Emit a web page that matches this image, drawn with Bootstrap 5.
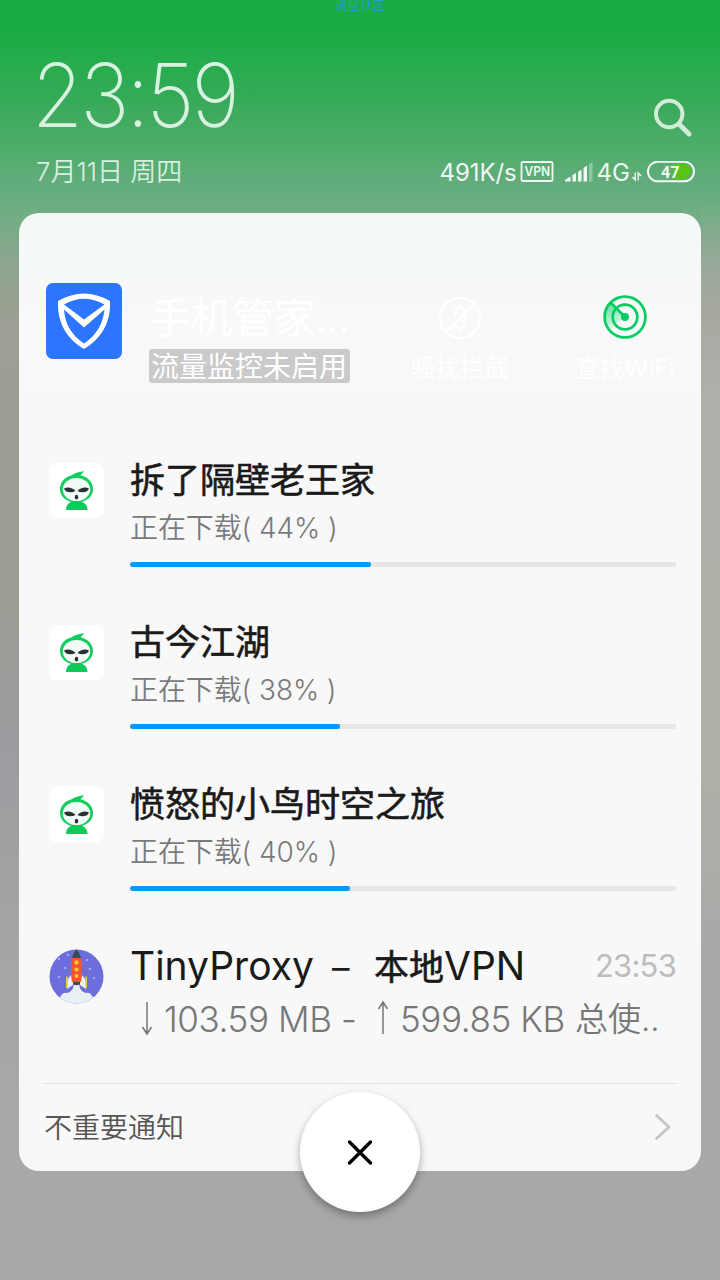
<!DOCTYPE html>
<html lang="zh-CN">
<head>
<meta charset="utf-8">
<meta name="viewport" content="width=device-width, initial-scale=1">
<title>通知</title>
<link href="https://cdn.jsdelivr.net/npm/bootstrap@5.3.0/dist/css/bootstrap.min.css" rel="stylesheet">
<style>
body{width:720px;height:1280px;overflow:hidden;font-family:Inter,"Noto Sans CJK SC",sans-serif;
 background:
 linear-gradient(#b0b0ab00 200px,#b0b0ab 400px,#b0b0a8 760px,#a8a8a8 960px) right top/20px 100% no-repeat,
 linear-gradient(#17ad42 0,#19ab43 30px,#27ac4e 65px,#36aa58 100px,#4fad6b 150px,#60ac7a 180px,#6eae83 210px,#8ba58f 260px,#9c9f93 320px,#9c9d94 600px,#9b9c9f 740px,#a5a5a6 950px,#a8a8a8 1100px)}
.shade{height:213px}
.toplabel{font-size:12.5px;line-height:12px;height:12px;color:#2a9ad0}
.shade-main{height:140px;padding:0 28px 0 32px}
.clock{font:200 88px/91px Inter,sans-serif;letter-spacing:-3px;color:#d9f1e0;margin-top:38px;transform:scaleX(.94);transform-origin:0 50%}
.find-ico{margin-bottom:1px}
.shade-info{height:40px;padding:0 25px 0 36px;color:#f0f8f2}
.date-txt{font-size:26px;line-height:40px;color:#d9efe0;font-weight:350}
.net{font-size:24px;line-height:40px}
.speed{letter-spacing:-.1px;padding-top:1px}
.vpn-box{margin-left:3px}
.bars{margin:0 3px 0 10px}
.gen{margin-right:1px;padding-top:1px}
.panel-sheet{width:682px;height:958px;margin:0 auto;border-radius:20px;background:linear-gradient(#f3f9f6,#f8f9f8 110px,#f8f8f8 180px)}
.mgr{height:231px;padding:70px 0 0 27px}
.mgr-text{margin-left:27px;width:202px}
.mgr-title{font-size:42px;line-height:66px;color:#fff;letter-spacing:-.5px;white-space:nowrap;padding-top:2px;margin-bottom:-2px}
.mgr-sub{font-size:28px;line-height:37px;height:34px;background:#cacaca;color:#fff;border-radius:3px;padding:0 2px;white-space:nowrap;width:201px}
.mgr-act{width:120px;font-size:24.500px;line-height:30px;color:#fff;margin:12px 0 0 49px;white-space:nowrap}
.mgr-act + .mgr-act{margin-left:45px}
.mgr-act svg{margin-bottom:12px}
.notice{height:162px;padding:16px 25px 0 30px}
.notice-icon{width:55px;height:55px;margin:3px 26px 0 0}
.n-title{font-size:35px;line-height:40px;color:#1a1a1a;-webkit-text-stroke:.6px #1a1a1a;white-space:nowrap}
.n-sub{font-size:28px;line-height:36px;margin-top:10px;color:#7a7a7a;font-weight:350;letter-spacing:-.1px;white-space:pre}
.n-bar{height:5px;margin-top:16px;background:#e7e7e7;border-radius:2px}
.n-bar .progress-bar{background:#0399ff;border-radius:2px}
.last-one{height:153px}
.latin{font-size:39px;-webkit-text-stroke:0}
.t-name{width:202px}
.t-dash{width:42px;font-size:35px}
.stamp{font-size:31px;letter-spacing:-.8px;color:#bdbdbd;line-height:40px}
.last-one .n-sub{font-size:35px;line-height:44px;margin-top:10px;color:#777;letter-spacing:-.4px}
.s-down{width:178px}
.s-up{width:175px}
.s-cjk{font-size:33px;letter-spacing:0}
.foot{height:88px;margin:0 25px;border-top:1px solid #e2e2e2;font-size:28px;color:#555;font-weight:350;padding:1px 4px 0 0}
.dismiss{width:120px;height:120px;left:300px;top:1092px;box-shadow:0 4px 9px rgba(0,0,0,.32)}
</style>
<script src="https://cdn.jsdelivr.net/npm/bootstrap@5.3.0/dist/js/bootstrap.bundle.min.js"></script>
</head>
<body class="m-0 position-relative">
<svg width="0" height="0" class="position-absolute">
 <symbol id="imp" viewBox="0 0 55 55">
  <rect width="55" height="55" rx="8" fill="#fff"/>
  <path d="M22 12.500C26 9.500 31 9 35 8Q34 10 31.500 12.300C39 14 44 19.500 44 26C44 34 37 39.500 27.500 39.500S11 34 11 26C11 19 16 14 22 12.500Z" fill="#12cd5e"/>
  <ellipse cx="27.500" cy="26.500" rx="13.700" ry="11.500" fill="#f3fbf6"/>
  <path d="M17 47C17 41 21 38 27.500 38S38.500 41 38.500 47Z" fill="#10c95a"/>
  <path d="M15 25.500C19 23.500 24 25 26.500 28C22 30.500 16.500 29.500 15 25.500ZM40 25.500C36 23.500 31 25 28.500 28C33 30.500 38.500 29.500 40 25.500Z" fill="#2b3030"/>
  <ellipse cx="27.500" cy="34.200" rx="1.700" ry="2.400" fill="#2b3030"/>
 </symbol>
</svg>

<header class="shade">
 <div class="toplabel text-center">流星社区</div>
 <div class="shade-main d-flex justify-content-between align-items-start">
  <div class="clock">23:59</div>
  <svg class="find-ico align-self-end" width="40" height="56" viewBox="0 0 40 56"><g fill="none" stroke="#d2ecd9"><circle cx="17.200" cy="19" r="13.200" stroke-width="4"/><path d="M27.500 29.500L37 39" stroke-width="4.800" stroke-linecap="round"/></g></svg>
 </div>
 <div class="shade-info d-flex justify-content-between align-items-center">
  <span class="date-txt">7月11日 周四</span>
  <div class="d-flex align-items-center net">
   <span class="speed">491K/s</span>
   <svg class="vpn-box" width="34" height="22" viewBox="0 0 34 22"><rect x="1.500" y="1" width="31" height="19" rx="1.500" fill="none" stroke="#f0f8f2" stroke-width="1.800"/><text x="4.500" y="15.200" font-family="Inter" font-size="12.500" font-weight="600" fill="#f0f8f2" textLength="25.500" lengthAdjust="spacingAndGlyphs">VPN</text></svg>
   <svg class="bars" width="30" height="22" viewBox="0 0 30 22" fill="#f0f8f2"><path d="M1 20.500V19L5.500 16H6.500V20.500ZM8.500 14L12 12V20.500H8.500ZM14 11L17.500 8.500V20.500H14ZM19.500 7L23 4.500V20.500H19.500Z"/><path d="M25 3L28.500 1V20.500H25Z" opacity=".35"/></svg>
   <span class="gen">4G</span>
   <svg width="12" height="22" viewBox="0 0 12 22" fill="none" stroke="#f0f8f2" stroke-width="1.400"><path d="M4.200 11.500V19L1.500 16M7.200 19.500V12L10 15"/></svg>
   <svg class="ms-1" width="48" height="22" viewBox="0 0 48 22"><rect x="1" y=".8" width="46" height="19.500" rx="9.700" fill="none" stroke="#f2faf3" stroke-width="2"/><path d="M27 2.800H37A7.800 7.800 0 0 1 37 18.300H25Z" fill="#57c417"/><text x="14" y="16.800" font-family="Roboto" font-size="17" font-weight="700" fill="#f4fbf4" textLength="18.500" lengthAdjust="spacingAndGlyphs">47</text></svg>
  </div>
 </div>
</header>

<main class="panel-sheet">
 <section class="mgr d-flex align-items-start">
  <svg class="flex-shrink-0" width="76" height="76" viewBox="0 0 76 76"><rect width="76" height="76" rx="7" fill="#2c75fe"/><path fill="#fff" fill-rule="evenodd" d="M12 18Q38 3 64 18C65 40 55 56 38 66C21 56 11 40 12 18ZM18 21.500Q38 10 58.500 21.500L38 36.500ZM18 26.500L38 44.500L58.500 26.500C57 41 50.500 52 38 60.500C25.500 52 19 41 18 26.500Z"/></svg>
  <div class="mgr-text flex-shrink-0">
   <div class="mgr-title">手机管家...</div>
   <div class="mgr-sub d-inline-block">流量监控未启用</div>
  </div>
  <div class="mgr-act flex-shrink-0 text-center">
   <svg class="d-block mx-auto" width="46" height="46" viewBox="0 0 46 46" fill="none" stroke="#fff" stroke-width="2.200"><circle cx="23" cy="23" r="20"/><path d="M9 37L37 9M18.500 21V15L23 11L27.500 15V31L23 35L18.500 31V27"/></svg>
   <div>骚扰拦截</div>
  </div>
  <div class="mgr-act flex-shrink-0 text-center">
   <svg class="d-block mx-auto" width="46" height="46" viewBox="0 0 46 46" fill="none" stroke="#07cc64" stroke-width="2.700"><defs><linearGradient id="sweep" x1=".4" y1="0" x2=".7" y2="1"><stop stop-color="#07cc64" stop-opacity=".6"/><stop offset="1" stop-color="#07cc64" stop-opacity="0"/></linearGradient></defs><path d="M23 22L9 8A20 20 0 0 0 8 35Z" fill="url(#sweep)" stroke="none"/><circle cx="23" cy="22" r="20.400"/><circle cx="23" cy="22" r="12.300"/><path d="M9 8L23 22"/><circle cx="23" cy="22" r="4" fill="#07cc64" stroke="none"/></svg>
   <div>查找WiFi</div>
  </div>
 </section>

 <article class="notice d-flex">
  <svg class="notice-icon flex-shrink-0"><use href="#imp"/></svg>
  <div class="flex-grow-1"><div class="n-title">拆了隔壁老王家</div><div class="n-sub">正在下载( 44% )</div><div class="progress n-bar"><div class="progress-bar" style="width:44.1%"></div></div></div>
 </article>
 <article class="notice d-flex">
  <svg class="notice-icon flex-shrink-0"><use href="#imp"/></svg>
  <div class="flex-grow-1"><div class="n-title">古今江湖</div><div class="n-sub">正在下载( 38% )</div><div class="progress n-bar"><div class="progress-bar" style="width:38.4%"></div></div></div>
 </article>
 <article class="notice d-flex">
  <svg class="notice-icon flex-shrink-0"><use href="#imp"/></svg>
  <div class="flex-grow-1"><div class="n-title">愤怒的小鸟时空之旅</div><div class="n-sub">正在下载( 40% )</div><div class="progress n-bar"><div class="progress-bar" style="width:40.3%"></div></div></div>
 </article>
 <article class="notice last-one d-flex">
  <svg class="notice-icon flex-shrink-0" viewBox="0 0 55 55"><defs><clipPath id="disc"><circle cx="27.500" cy="27.500" r="27"/></clipPath></defs><g clip-path="url(#disc)"><rect width="55" height="55" fill="#6b6edc"/><path d="M0 55V51Q8 51 12 47Q14 43 18 44Q24 43 25 35H30Q31 43 37 44Q41 43 43 47Q47 51 55 51V55Z" fill="#e9f0f1"/></g><g fill="#c9caf5"><circle cx="10" cy="10" r=".9"/><circle cx="19" cy="6" r=".9"/><circle cx="16" cy="19" r=".9"/><circle cx="10" cy="28" r=".9"/><circle cx="38" cy="11" r=".9"/><circle cx="41" cy="20" r=".9"/><circle cx="45" cy="29" r=".9"/></g><path d="M22 26Q16 32 18 40L24 36V28ZM33 26Q39 32 37 40L31 36V28Z" fill="#eef2f5"/><path d="M17 27.500H18.800V39H17ZM36.200 27.500H38V39H36.200Z" fill="#e9cc36"/><path d="M24 32H31V35Q27.500 37.500 24 35Z" fill="#424854"/><path d="M23 9H32Q34.500 21 32 33H23Q20.500 21 23 9Z" fill="#f35438"/><path d="M23 9Q24.500 3 27.500 .5Q30.500 3 32 9Z" fill="#3d4a52"/><g fill="#ffc928"><circle cx="27.500" cy="13.500" r="2.200"/><circle cx="27.500" cy="20.500" r="2.100"/><circle cx="27.500" cy="27" r="1.900"/></g></svg>
  <div class="flex-grow-1">
   <div class="d-flex justify-content-between"><div class="n-title d-flex align-items-baseline"><span class="latin t-name">TinyProxy</span><span class="latin t-dash">–</span><span>本地</span><span class="latin">VPN</span></div><div class="stamp">23:53</div></div>
   <div class="n-sub d-flex"><svg width="34" height="44" viewBox="0 0 34 44" fill="none" stroke="#777" stroke-width="1.500"><path d="M17 5V37M12.500 30L17 37L21.500 30"/></svg><span class="s-down">103.59 MB -</span><svg class="ms-4" width="34" height="44" viewBox="0 0 34 44" fill="none" stroke="#777" stroke-width="1.500"><path d="M17 37V5M12.500 12L17 5L21.500 12"/></svg><span class="s-up">599.85 KB</span><span class="s-cjk">总使..</span></div>
  </div>
 </article>
 <footer class="foot d-flex justify-content-between align-items-center"><span>不重要通知</span><svg width="18" height="30" viewBox="0 0 18 30" fill="none" stroke="#c5c5c5" stroke-width="2.800" stroke-linecap="round" stroke-linejoin="round"><path d="M2.500 2.500L15 14L2.500 25.500"/></svg></footer>
</main>
<button type="button" class="dismiss position-absolute rounded-circle border-0 bg-white p-0 d-flex align-items-center justify-content-center" aria-label="清除"><svg width="30" height="30" viewBox="0 0 30 30" stroke="#000" stroke-width="3.400" stroke-linecap="round"><path d="M4.500 5L25.500 26M25.500 5L4.500 26"/></svg></button>
</body>
</html>
